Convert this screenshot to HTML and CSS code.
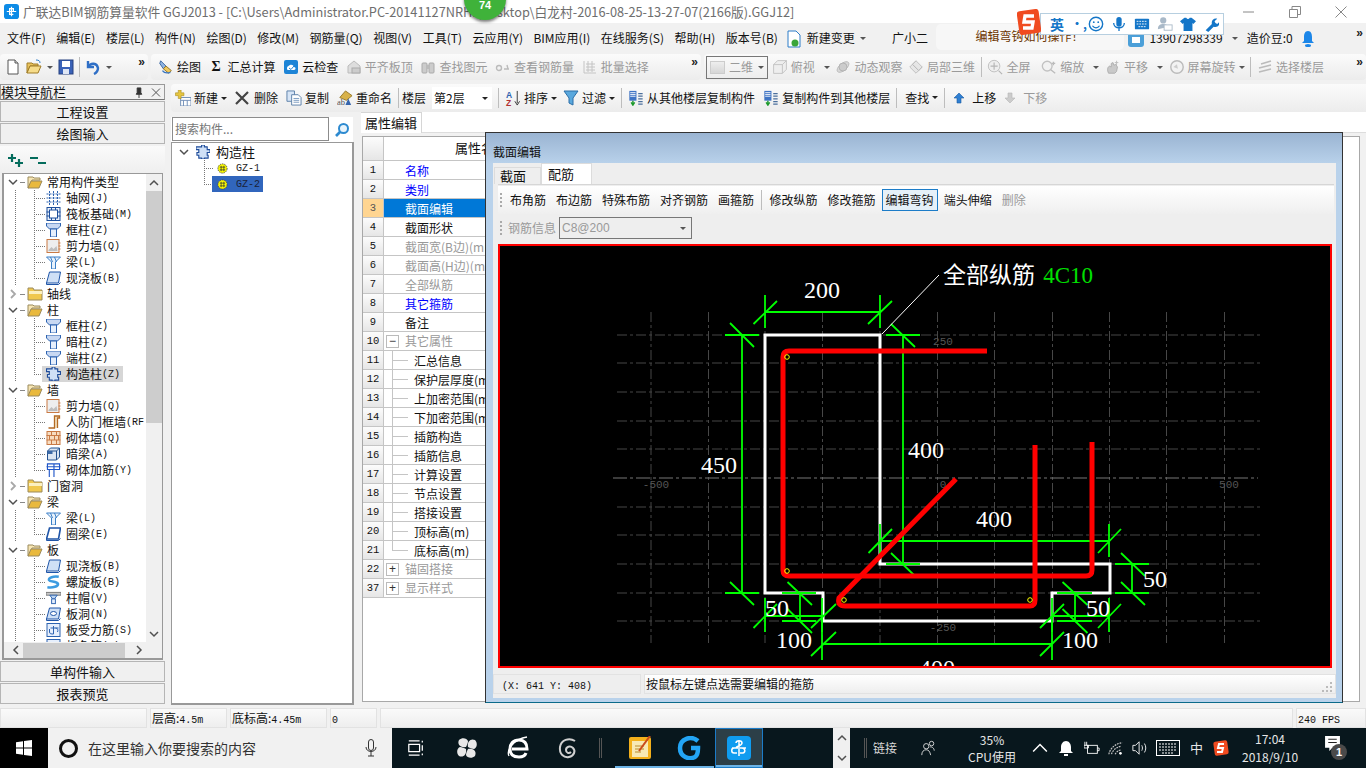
FILE: index.html
```html
<!DOCTYPE html>
<html lang="zh">
<head>
<meta charset="utf-8">
<title>广联达BIM钢筋算量软件</title>
<link rel="stylesheet" href="styles.css">
</head>
<body>
<svg class="defs" width="0" height="0">
<defs>
<symbol id="i-new" viewBox="0 0 16 16"><path d="M3 1h7l3 3v11H3z" fill="#fff" stroke="#555"/><path d="M10 1v3h3" fill="#ddd" stroke="#555"/></symbol>
<symbol id="i-open" viewBox="0 0 16 16"><path d="M1 4h5l1 1h5v2H4L1 14z" fill="#e8c25c" stroke="#a07c28"/><path d="M4 7h11l-3 7H1z" fill="#f6dc8a" stroke="#a07c28"/><path d="M10 1c3 0 4 1 4 3" fill="none" stroke="#2d7dc8"/></symbol>
<symbol id="i-save" viewBox="0 0 16 16"><rect x="1" y="1" width="14" height="14" fill="#3a62b8" stroke="#27407e"/><rect x="4" y="2" width="8" height="6" fill="#fff"/><rect x="5" y="10" width="6" height="5" fill="#dfe6f4"/></symbol>
<symbol id="i-undo" viewBox="0 0 16 16"><path d="M3 2v6h6" fill="none" stroke="#2f6fc6" stroke-width="2.4"/><path d="M3 8c3-5 9-4 10 1 0 3-2 5-4 6" fill="none" stroke="#2f6fc6" stroke-width="2.4"/></symbol>
<symbol id="i-draw" viewBox="0 0 18 18"><path d="M3 2l6 6-3 3-4-6z" fill="#8fb4e0" stroke="#35609c"/><path d="M9 8l6 5-3 3-6-5z" fill="#f1c95b" stroke="#8a6c20"/><path d="M5 13c2 3 6 3 9 2" fill="none" stroke="#3a76c0" stroke-width="1.4"/></symbol>
<symbol id="i-cloud" viewBox="0 0 16 16"><rect x="1" y="1" width="14" height="14" rx="2" fill="#1d84d6"/><path d="M4 9c0-2 2-2 3-3 2-1 4 1 4 2 2 0 2 3 0 3H5c-1 0-1-1-1-2z" fill="#fff"/><path d="M6 9l2 1.5L11 7" fill="none" stroke="#1d84d6"/></symbol>
<symbol id="i-align" viewBox="0 0 16 16"><path d="M2 14V7l6-5 6 5v7z" fill="#ddd" stroke="#bbb"/><rect x="6" y="9" width="8" height="5" fill="#ccc" stroke="#aaa"/></symbol>
<symbol id="i-binoc" viewBox="0 0 16 16"><rect x="2" y="4" width="5" height="10" rx="1" fill="#ccc" stroke="#aaa"/><rect x="9" y="4" width="5" height="10" rx="1" fill="#ccc" stroke="#aaa"/><rect x="6" y="6" width="4" height="4" fill="#bbb"/></symbol>
<symbol id="i-glasses" viewBox="0 0 16 16"><circle cx="4" cy="9" r="2.5" fill="none" stroke="#bbb" stroke-width="1.4"/><path d="M9 10h5M12 6l1 4" fill="none" stroke="#bbb" stroke-width="1.4"/></symbol>
<symbol id="i-batch" viewBox="0 0 16 16"><path d="M2 2v12h12M4 5h9M4 8h9M4 11h9M6 2v11M10 2v11" fill="none" stroke="#c4c4c4"/></symbol>
<symbol id="i-box" viewBox="0 0 20 20"><path d="M2 7l5-5h11v11l-5 5H2z" fill="#eee" stroke="#bbb"/><path d="M2 7h11v11M13 7l5-5" fill="none" stroke="#bbb"/></symbol>
<symbol id="i-orbit" viewBox="0 0 18 18"><ellipse cx="9" cy="9" rx="8" ry="4" transform="rotate(-40 9 9)" fill="#d8d8d8" stroke="#bbb"/><circle cx="9" cy="9" r="4.5" fill="#ccc" stroke="#b0b0b0"/></symbol>
<symbol id="i-local" viewBox="0 0 18 18"><path d="M2 9l7-7 7 7-7 7z" fill="#e6e6e6" stroke="#bbb"/><path d="M5 6l7 7M9 2l-4 4 7 7 4-4" fill="none" stroke="#bbb"/></symbol>
<symbol id="i-fit" viewBox="0 0 18 18"><circle cx="8" cy="8" r="6.5" fill="#eee" stroke="#bbb"/><path d="M8 4v8M4 8h8M13 13l4 4" fill="none" stroke="#b5b5b5" stroke-width="1.3"/></symbol>
<symbol id="i-zoom" viewBox="0 0 18 18"><circle cx="7" cy="8" r="5.5" fill="#f2f2f2" stroke="#c2c2c2" stroke-width="1.5"/><path d="M11 12l5 4M14 3v4M12 5h4" fill="none" stroke="#bbb" stroke-width="1.5"/></symbol>
<symbol id="i-pan" viewBox="0 0 18 18"><path d="M4 16c-2-4-1-7 1-8l2 1V5l2-1 1 3 2-1 2 3-1 5-2 2z" fill="#c9c9c9" stroke="#aaa"/><path d="M13 2v5M11 4h4" stroke="#bbb" fill="none"/></symbol>
<symbol id="i-rot" viewBox="0 0 18 18"><circle cx="9" cy="9" r="7" fill="#f2f2f2" stroke="#bbb" stroke-width="1.6"/><path d="M5 9l4-3 1 5z" fill="#ccc"/></symbol>
<symbol id="i-floor" viewBox="0 0 16 16"><path d="M4 5l10-3M2 9l12-3M2 13l12-3" stroke="#bbb" stroke-width="1.6" fill="none"/></symbol>
<symbol id="i-plusnew" viewBox="0 0 17 17"><rect x="6" y="8" width="11" height="9" fill="#fff" stroke="#6f8db5"/><path d="M6 11h11M9 11v6M13 11v6" stroke="#6f8db5"/><path d="M3.5 0h3v3h3v3h-3v3h-3V6h-3V3h3z" fill="#e6c53f" stroke="#a88b1f" stroke-width=".6"/></symbol>
<symbol id="i-x" viewBox="0 0 14 14"><path d="M1 1l12 12M13 1L1 13" stroke="#444" stroke-width="2.2"/></symbol>
<symbol id="i-copy" viewBox="0 0 17 17"><path d="M1 1h8v11H1z" fill="#d7e5f6" stroke="#5b7fa8"/><path d="M6 5h7l3 3v8H6z" fill="#fff" stroke="#5b7fa8"/><path d="M8 9h6M8 11h6M8 13h6" stroke="#7a9ac0"/></symbol>
<symbol id="i-rename" viewBox="0 0 17 17"><path d="M3 8l6-7 7 5-6 5z" fill="#d8b24a" stroke="#96782a"/><text x="0" y="16" class="ab">ab</text><path d="M12 9l-3 7h6z" fill="#3665ad"/></symbol>
<symbol id="i-sort" viewBox="0 0 15 17"><text x="0" y="8" class="az a">A</text><text x="0" y="17" class="az z">Z</text><path d="M12 1v13M9.5 12l2.5 4 2.5-4" stroke="#333" fill="none"/></symbol>
<symbol id="i-filter" viewBox="0 0 16 16"><path d="M1 1h14l-5 7v7l-4-2V8z" fill="#5aa8dd" stroke="#2c6fa8"/></symbol>
<symbol id="i-cfrom" viewBox="0 0 17 18"><rect x="1" y="1" width="8" height="11" fill="#3f74c4"/><path d="M2 3h6M2 5h6M2 7h6" stroke="#fff"/><path d="M5 12v4M3 14l2 3 2-3" stroke="#1e9a2e" fill="none" stroke-width="1.6"/><path d="M11 4h5M11 7h5M11 10h5M11 13h5M11 16h5" stroke="#4b6f9c" stroke-width="1.4"/></symbol>
<symbol id="i-up" viewBox="0 0 12 12"><path d="M6 1l5 5H8v5H4V6H1z" fill="#2f7fd2" stroke="#1a5aa2" stroke-width=".6"/></symbol>
<symbol id="i-down" viewBox="0 0 12 12"><path d="M4 1h4v5h3l-5 5-5-5h3z" fill="#ccc" stroke="#b5b5b5" stroke-width=".6"/></symbol>
<symbol id="i-search" viewBox="0 0 16 16"><circle cx="9.5" cy="6.5" r="4.5" fill="#e8f4fc" stroke="#2d8ad0" stroke-width="2"/><path d="M6 10l-4 4" stroke="#2d8ad0" stroke-width="2.6"/></symbol>
<symbol id="i-fo" viewBox="0 0 16 14"><path d="M1 2h5l1 1h6v2H5l-2 7-2 1z" fill="#f7e6b4" stroke="#9b8a5c"/><path d="M4 6h11l-3 7H1z" fill="#e9b93e" stroke="#9b8a5c"/></symbol>
<symbol id="i-fc" viewBox="0 0 16 14"><path d="M1 3V1h5l1 2h8v10H1z" fill="#f0c84e" stroke="#9b8a5c"/><path d="M2 4h13v3H2z" fill="#fbf0c0"/></symbol>
<symbol id="i-grid" viewBox="0 0 14 14"><path d="M0 3h14M0 7h14M0 11h14M3 0v14M7 0v14M11 0v14" stroke="#2d63b0" fill="none" stroke-dasharray="2 1"/></symbol>
<symbol id="i-raft" viewBox="0 0 14 14"><rect x=".5" y=".5" width="13" height="13" fill="#e9f0fb" stroke="#1d4f9c"/><rect x="3" y="3" width="8" height="8" fill="#fff" stroke="#1d4f9c"/><path d="M0 5h3M0 9h3M11 5h3M11 9h3M5 0v3M9 0v3M5 11v3M9 11v3" stroke="#1d4f9c"/></symbol>
<symbol id="i-col" viewBox="0 0 14 14"><path d="M0 0h14v3l-3 3H3L0 3z" fill="#c8d8f2" stroke="#2d63b0"/><rect x="4" y="6" width="6" height="8" fill="#e6effc" stroke="#2d63b0"/></symbol>
<symbol id="i-wall" viewBox="0 0 14 14"><rect x=".5" y=".5" width="12" height="13" fill="#eee" stroke="#c97a45"/><path d="M2 11l3-3 2 2 3-3 1 5H2z" fill="#aaa" opacity=".7"/><path d="M12 4h2M12 7h2M12 10h2" stroke="#c97a45"/></symbol>
<symbol id="i-beam" viewBox="0 0 14 14"><path d="M0 2h14L9 7v7H5V7z" fill="#e8f1fb" stroke="#3a7fc6"/><path d="M4 2l2 5M8 2l2 5" stroke="#3a7fc6"/></symbol>
<symbol id="i-slab" viewBox="0 0 14 14"><path d="M3 1h11l-2 11H0z" fill="#cfe0f6" stroke="#1f55a8"/><path d="M0 12v1.5h12l2-2" fill="none" stroke="#1f55a8"/></symbol>
<symbol id="i-gz" viewBox="0 0 15 15"><path d="M3 2h3V0h3v2h3v3h3v3h-3v3h1v3H9v1H6v-1H3v-3H1V8h2V5H0V2z" fill="#cfe0f6" stroke="#1f4c9a" stroke-width="1.2"/></symbol>
<symbol id="i-bar" viewBox="0 0 12 12"><circle cx="6" cy="6" r="5" fill="#ffff00" stroke="#444" stroke-dasharray="1.5 1"/><path d="M3 4.5h6M3 7.5h6M4.5 3v6M7.5 3v6" stroke="#333" stroke-width=".8"/></symbol>
<symbol id="i-door" viewBox="0 0 14 14"><path d="M2 13h6V1h5v2h-2v10" fill="#f5e3c4" stroke="#b36a24" stroke-width="1.3"/></symbol>
<symbol id="i-brick" viewBox="0 0 14 14"><rect x=".5" y=".5" width="13" height="13" fill="#f7dcc0" stroke="#c97a45"/><path d="M0 4.5h14M0 9h14M5 0v4.5M10 0v4.5M3 4.5V9M8 4.5V9M12 4.5V9M5 9v5M10 9v5" stroke="#c97a45"/></symbol>
<symbol id="i-dark" viewBox="0 0 14 14"><path d="M1 4l3-3h9v9l-3 3H1z" fill="#dbe6f3" stroke="#24528f"/><path d="M1 4h9v9M10 4l3-3" fill="none" stroke="#24528f"/><rect x="1" y="4" width="5" height="3" fill="#3c6aa8"/></symbol>
<symbol id="i-reinf" viewBox="0 0 15 15"><path d="M1 1h13v6H1zM3 7v8M8 1v14M0 4h15" fill="none" stroke="#1f55c8" stroke-width="1.2"/></symbol>
<symbol id="i-ring" viewBox="0 0 14 14"><path d="M3 1h11l-2 11H0z" fill="#fff" stroke="#1f55a8" stroke-width="1.6"/><path d="M0 12v1.5h12l2-2" fill="none" stroke="#1f55a8"/></symbol>
<symbol id="i-spiral" viewBox="0 0 16 16"><path d="M14 2C8 1 2 3 3 6c1 2 9 1 10 4s-6 5-12 4" fill="none" stroke="#3d9be0" stroke-width="3"/></symbol>
<symbol id="i-cap" viewBox="0 0 16 14"><rect x="0" y="1" width="16" height="3" fill="#c8c8c8" stroke="#777"/><path d="M4 4h8L9 8H7z" fill="#bcd4f2" stroke="#2d63b0"/><rect x="6" y="8" width="4" height="5" fill="#e6effc" stroke="#2d63b0"/></symbol>
<symbol id="i-hole" viewBox="0 0 14 14"><path d="M3 1h11l-2 11H0z" fill="#cfe0f6" stroke="#1f55a8"/><ellipse cx="7" cy="6.5" rx="3" ry="2" fill="#fff" stroke="#1f55a8"/><path d="M0 12v1.5h12l2-2" fill="none" stroke="#1f55a8"/></symbol>
<symbol id="i-sbar" viewBox="0 0 14 14"><rect x=".5" y=".5" width="13" height="13" fill="#e6effc" stroke="#2d63b0"/><path d="M3 6v3c0 2 2 2 4 2M7 3v8M9 5c2 0 3 2 2 4M4 5h8" fill="none" stroke="#2d63b0"/></symbol>
<symbol id="i-chev" viewBox="0 0 10 10"><path d="M1 3l4 4 4-4" fill="none" stroke="#505050" stroke-width="1.5"/></symbol>
<symbol id="i-chevr" viewBox="0 0 10 10"><path d="M3 1l4 4-4 4" fill="none" stroke="#a8a8a8" stroke-width="1.8"/></symbol>
</defs>
</svg>

<div class="app">
  <header class="titlebar">
    <svg class="appicon" viewBox="0 0 16 16"><rect width="16" height="16" rx="3" fill="#0c8be6"/><path d="M8 3v10M3 8h10M6 5h4v3H6zM6 8v3h4" fill="none" stroke="#fff" stroke-width="1.3"/></svg>
    <span class="titletext">广联达BIM钢筋算量软件 GGJ2013 - [C:\Users\Administrator.PC-20141127NRHI\Desktop\白龙村-2016-08-25-13-27-07(2166版).GGJ12]</span>
    <div class="winctl">
      <svg class="wc" viewBox="0 0 12 12"><path d="M0 6h11" stroke="#888"/></svg>
      <svg class="wc" viewBox="0 0 12 12"><path d="M.5 3.5h8v8h-8zM3 3V.5h8.500v8H9" fill="none" stroke="#888"/></svg>
      <svg class="wc" viewBox="0 0 12 12"><path d="M.5.5l11 11M11.500.5l-11 11" stroke="#888"/></svg>
    </div>
  </header>

  <nav class="menubar">
    <span>文件(F)</span><span>编辑(E)</span><span>楼层(L)</span><span>构件(N)</span><span>绘图(D)</span><span>修改(M)</span><span>钢筋量(Q)</span><span>视图(V)</span><span>工具(T)</span><span>云应用(Y)</span><span>BIM应用(I)</span><span>在线服务(S)</span><span>帮助(H)</span><span>版本号(B)</span>
    <svg class="ic m-new" viewBox="0 0 16 18"><path d="M2 1h8l4 4v12H2z" fill="#fff" stroke="#2d7dc8"/><circle cx="9" cy="13" r="3.500" fill="#3aa53a"/></svg>
    <span class="m-newtext">新建变更</span><i class="arrow a-new"></i>
    <span class="m-xiao">广小二</span>
    <div class="hint"><span>编辑弯钩如何操作！</span></div>
    <svg class="ic m-user" viewBox="0 0 16 16"><rect width="16" height="16" rx="3" fill="#4b9fd8"/><rect x="4" y="6" width="8" height="6" fill="#fff"/></svg>
    <span class="m-phone">13907298339</span><i class="arrow a-sm"></i>
    <span class="m-bean">造价豆:0</span>
    <svg class="ic m-bell" viewBox="0 0 14 18"><path d="M7 1c-3 0-4 3-4 6v4l-2 2h12l-2-2V7c0-3-1-6-4-6z" fill="#1c86e8"/><ellipse cx="7" cy="15.500" rx="3" ry="1.500" fill="#1c86e8"/></svg>
    <span class="more">»</span>
  </nav>

  <div class="toolrow">
    <div class="seg seg-a">
      <svg class="ic"><use href="#i-new"/></svg>
      <svg class="ic"><use href="#i-open"/></svg><i class="arrow"></i>
      <svg class="ic"><use href="#i-save"/></svg>
      <i class="sep"></i>
      <svg class="ic"><use href="#i-undo"/></svg><i class="arrow"></i>
      <span class="more">»</span>
    </div>
    <div class="seg seg-b">
      <span class="tool"><svg class="ic"><use href="#i-draw"/></svg>绘图</span>
      <span class="tool"><b class="sigma">Σ</b>汇总计算</span>
      <span class="tool"><svg class="ic"><use href="#i-cloud"/></svg>云检查</span>
      <span class="tool off"><svg class="ic"><use href="#i-align"/></svg>平齐板顶</span>
      <span class="tool off"><svg class="ic"><use href="#i-binoc"/></svg>查找图元</span>
      <span class="tool off"><svg class="ic"><use href="#i-glasses"/></svg>查看钢筋量</span>
      <span class="tool off"><svg class="ic"><use href="#i-batch"/></svg>批量选择</span>
      <span class="more end">»</span>
    </div>
    <div class="seg seg-c off">
      <span class="combo2d"><i class="sq"></i>二维<i class="arrow"></i></span>
      <span class="tool t-top"><svg class="ic"><use href="#i-box"/></svg>俯视<i class="arrow gap"></i></span>
      <span class="tool"><svg class="ic"><use href="#i-orbit"/></svg>动态观察</span>
      <span class="tool"><svg class="ic"><use href="#i-local"/></svg>局部三维</span>
      <i class="sep"></i>
      <span class="tool"><svg class="ic"><use href="#i-fit"/></svg>全屏</span>
      <span class="tool t-zoom"><svg class="ic"><use href="#i-zoom"/></svg>缩放<i class="arrow gap"></i></span>
      <span class="tool"><svg class="ic"><use href="#i-pan"/></svg>平移<i class="arrow gap"></i></span>
      <span class="tool"><svg class="ic"><use href="#i-rot"/></svg>屏幕旋转<i class="arrow"></i></span>
      <i class="sep"></i>
      <span class="tool"><svg class="ic"><use href="#i-floor"/></svg>选择楼层</span>
      <span class="more end dark">»</span>
    </div>
  </div>

  <main class="main">
    <aside class="nav">
      <div class="navhead"><span>模块导航栏</span><span class="pin">
        <svg class="pinic" viewBox="0 0 10 12"><path d="M3 1h4v5l1 2H2l1-2zM5 8v4" fill="#333" stroke="#333"/></svg>
        <svg class="pinic" viewBox="0 0 10 10"><path d="M1 1l8 8M9 1l-8 8" stroke="#555"/></svg></span></div>
      <div class="navbtn">工程设置</div>
      <div class="navbtn">绘图输入</div>
      <div class="pmbar">
        <svg class="pm" viewBox="0 0 18 18"><path d="M5 3v8M1 7h8M12 8v8M8 12h8" stroke="#046c5c" stroke-width="2.200"/></svg>
        <svg class="pm" viewBox="0 0 18 18"><path d="M1 7h8M9 12h8" stroke="#046c5c" stroke-width="2.200"/></svg>
      </div>
      <div class="navtree">
        <div class="treebody">
          <div class="rows">
            <div class="r top open"><svg class="tw"><use href="#i-chev"/></svg><svg class="fo"><use href="#i-fo"/></svg>常用构件类型</div>
            <div class="r kid"><svg class="ci"><use href="#i-grid"/></svg>轴网<i class="m">(J)</i></div>
            <div class="r kid"><svg class="ci"><use href="#i-raft"/></svg>筏板基础<i class="m">(M)</i></div>
            <div class="r kid"><svg class="ci"><use href="#i-col"/></svg>框柱<i class="m">(Z)</i></div>
            <div class="r kid"><svg class="ci"><use href="#i-wall"/></svg>剪力墙<i class="m">(Q)</i></div>
            <div class="r kid"><svg class="ci"><use href="#i-beam"/></svg>梁<i class="m">(L)</i></div>
            <div class="r kid last"><svg class="ci"><use href="#i-slab"/></svg>现浇板<i class="m">(B)</i></div>
            <div class="r top"><svg class="tw"><use href="#i-chevr"/></svg><svg class="fo"><use href="#i-fc"/></svg>轴线</div>
            <div class="r top open"><svg class="tw"><use href="#i-chev"/></svg><svg class="fo"><use href="#i-fo"/></svg>柱</div>
            <div class="r kid"><svg class="ci"><use href="#i-col"/></svg>框柱<i class="m">(Z)</i></div>
            <div class="r kid"><svg class="ci"><use href="#i-col"/></svg>暗柱<i class="m">(Z)</i></div>
            <div class="r kid"><svg class="ci"><use href="#i-col"/></svg>端柱<i class="m">(Z)</i></div>
            <div class="r kid last"><span class="hl"><svg class="ci"><use href="#i-gz"/></svg>构造柱<i class="m">(Z)</i></span></div>
            <div class="r top open"><svg class="tw"><use href="#i-chev"/></svg><svg class="fo"><use href="#i-fo"/></svg>墙</div>
            <div class="r kid"><svg class="ci"><use href="#i-wall"/></svg>剪力墙<i class="m">(Q)</i></div>
            <div class="r kid"><svg class="ci"><use href="#i-door"/></svg>人防门框墙<i class="m">(RF</i></div>
            <div class="r kid"><svg class="ci"><use href="#i-brick"/></svg>砌体墙<i class="m">(Q)</i></div>
            <div class="r kid"><svg class="ci"><use href="#i-dark"/></svg>暗梁<i class="m">(A)</i></div>
            <div class="r kid last"><svg class="ci"><use href="#i-reinf"/></svg>砌体加筋<i class="m">(Y)</i></div>
            <div class="r top"><svg class="tw"><use href="#i-chevr"/></svg><svg class="fo"><use href="#i-fc"/></svg>门窗洞</div>
            <div class="r top open"><svg class="tw"><use href="#i-chev"/></svg><svg class="fo"><use href="#i-fo"/></svg>梁</div>
            <div class="r kid"><svg class="ci"><use href="#i-beam"/></svg>梁<i class="m">(L)</i></div>
            <div class="r kid last"><svg class="ci"><use href="#i-ring"/></svg>圈梁<i class="m">(E)</i></div>
            <div class="r top open"><svg class="tw"><use href="#i-chev"/></svg><svg class="fo"><use href="#i-fo"/></svg>板</div>
            <div class="r kid"><svg class="ci"><use href="#i-slab"/></svg>现浇板<i class="m">(B)</i></div>
            <div class="r kid"><svg class="ci"><use href="#i-spiral"/></svg>螺旋板<i class="m">(B)</i></div>
            <div class="r kid"><svg class="ci"><use href="#i-cap"/></svg>柱帽<i class="m">(V)</i></div>
            <div class="r kid"><svg class="ci"><use href="#i-hole"/></svg>板洞<i class="m">(N)</i></div>
            <div class="r kid"><svg class="ci"><use href="#i-sbar"/></svg>板受力筋<i class="m">(S)</i></div>
            <div class="r kid"><svg class="ci"><use href="#i-sbar"/></svg>板负筋<i class="m">(F)</i></div>
          </div>
          <div class="vscroll">
            <svg class="sa flip"><use href="#i-chev"/></svg>
            <div class="vthumb"></div>
            <div class="vspace"></div>
            <svg class="sa"><use href="#i-chev"/></svg>
          </div>
        </div>
        <div class="hscroll">
          <svg class="sa left"><use href="#i-chev"/></svg>
          <div class="hthumb"></div>
          <svg class="sa right"><use href="#i-chev"/></svg>
        </div>
      </div>
      <div class="navbtn">单构件输入</div>
      <div class="navbtn">报表预览</div>
    </aside>

    <section class="work">
      <div class="toolbar2">
        <span class="tool"><svg class="ic"><use href="#i-plusnew"/></svg>新建<i class="arrow dk"></i></span>
        <span class="tool t-del"><svg class="ic ic-x"><use href="#i-x"/></svg>删除</span>
        <span class="tool t-del"><svg class="ic"><use href="#i-copy"/></svg>复制</span>
        <span class="tool t-ren"><svg class="ic"><use href="#i-rename"/></svg>重命名</span>
        <i class="sep s-tight"></i>
        <span>楼层</span>
        <span class="floorsel">第2层<i class="arrow dk"></i></span>
        <i class="sep"></i>
        <span class="tool"><svg class="ic"><use href="#i-sort"/></svg>排序<i class="arrow dk"></i></span>
        <span class="tool"><svg class="ic"><use href="#i-filter"/></svg>过滤<i class="arrow dk"></i></span>
        <i class="sep"></i>
        <span class="tool"><svg class="ic"><use href="#i-cfrom"/></svg>从其他楼层复制构件</span>
        <span class="tool t-cpy"><svg class="ic"><use href="#i-cfrom"/></svg>复制构件到其他楼层</span>
        <i class="sep"></i>
        <span class="tool t-cpy">查找<i class="arrow dk"></i></span>
        <i class="sep"></i>
        <span class="tool t-cpy"><svg class="ic ic-ud"><use href="#i-up"/></svg>上移</span>
        <span class="tool off t-cpy"><svg class="ic ic-ud"><use href="#i-down"/></svg>下移</span>
      </div>
      <div class="workbody">
        <div class="midcol">
          <div class="searchrow">
            <div class="searchbox">搜索构件...</div>
            <svg class="searchic"><use href="#i-search"/></svg>
          </div>
          <div class="comptree">
            <div class="tr0"><svg class="tw"><use href="#i-chev"/></svg><svg class="gzi"><use href="#i-gz"/></svg>构造柱</div>
            <div class="tr1"><svg class="bi"><use href="#i-bar"/></svg><span class="gzt">GZ-1</span></div>
            <div class="tr1 lastc"><span class="sel"><svg class="bi"><use href="#i-bar"/></svg><span class="gzt">GZ-2</span></span></div>
          </div>
        </div>
        <div class="rightcol">
          <div class="tabline"><span class="ptab">属性编辑</span></div>
          <div class="grid">
            <div class="gr head"><span class="n"></span><span class="name c">属性名称</span></div>
            <div class="gr"><span class="n">1</span><span class="name l1 blue">名称</span></div>
            <div class="gr"><span class="n">2</span><span class="name l1 blue">类别</span></div>
            <div class="gr cur"><span class="n">3</span><span class="name l1">截面编辑</span></div>
            <div class="gr"><span class="n">4</span><span class="name l1">截面形状</span></div>
            <div class="gr"><span class="n">5</span><span class="name l1 gray">截面宽(B边)(mm)</span></div>
            <div class="gr"><span class="n">6</span><span class="name l1 gray">截面高(H边)(mm)</span></div>
            <div class="gr"><span class="n">7</span><span class="name l1 gray">全部纵筋</span></div>
            <div class="gr"><span class="n">8</span><span class="name l1 blue">其它箍筋</span></div>
            <div class="gr"><span class="n">9</span><span class="name l1">备注</span></div>
            <div class="gr"><span class="n">10</span><span class="name exp gray"><i class="pb">−</i>其它属性</span></div>
            <div class="gr"><span class="n">11</span><span class="name l2">汇总信息</span></div>
            <div class="gr"><span class="n">12</span><span class="name l2">保护层厚度(mm)</span></div>
            <div class="gr"><span class="n">13</span><span class="name l2">上加密范围(mm)</span></div>
            <div class="gr"><span class="n">14</span><span class="name l2">下加密范围(mm)</span></div>
            <div class="gr"><span class="n">15</span><span class="name l2">插筋构造</span></div>
            <div class="gr"><span class="n">16</span><span class="name l2">插筋信息</span></div>
            <div class="gr"><span class="n">17</span><span class="name l2">计算设置</span></div>
            <div class="gr"><span class="n">18</span><span class="name l2">节点设置</span></div>
            <div class="gr"><span class="n">19</span><span class="name l2">搭接设置</span></div>
            <div class="gr"><span class="n">20</span><span class="name l2">顶标高(m)</span></div>
            <div class="gr"><span class="n">21</span><span class="name l2 tail">底标高(m)</span></div>
            <div class="gr"><span class="n">22</span><span class="name exp gray"><i class="pb">+</i>锚固搭接</span></div>
            <div class="gr"><span class="n">37</span><span class="name exp gray"><i class="pb">+</i>显示样式</span></div>
          </div>
        </div>
      </div>
    </section>
  </main>

  <footer class="statusbar">
    <span class="sc s1"></span>
    <span class="sc s2">层高:<i class="m">4.5m</i></span>
    <span class="sc s3">底标高:<i class="m">4.45m</i></span>
    <span class="sc s4"><i class="m">0</i></span>
    <span class="sc s5"></span>
    <span class="sc s6"><i class="m">240 FPS</i></span>
  </footer>

  <div class="taskbar">
    <div class="start"><svg class="winlogo" viewBox="0 0 16 16"><path d="M0 2.200l7-1v6.300H0zM8 1l8-1v7.500H8zM0 8.500h7v6.300l-7-1zM8 8.500h8V16l-8-1.100z" fill="#fff"/></svg></div>
    <div class="tbsearch">
      <i class="cortana"></i><span class="tbph">在这里输入你要搜索的内容</span>
      <svg class="mic" viewBox="0 0 12 18"><rect x="3.500" y=".5" width="5" height="11" rx="2.500" fill="none" stroke="#333"/><path d="M1 8c0 6 10 6 10 0M6 13v4M3 17h6" fill="none" stroke="#333"/></svg>
    </div>
    <div class="tbapps">
      <span class="tbi"><svg class="ti" viewBox="0 0 20 20"><path d="M2 2h12M2 18h12M2 6h12v8H2zM17 2v2M17 7v6M17 16v2" fill="none" stroke="#fff" stroke-width="1.400"/></svg></span>
      <span class="tbi"><svg class="ti big" viewBox="0 0 24 24"><g fill="#e8e8e8"><path d="M11 11C5 12 2 8 4 4c3-3 8-2 9 1 0 2-1 4-2 6zM13 11c-1-6 3-9 7-7 3 3 2 8-1 9-2 0-4-1-6-2zM13 13c6-1 9 3 7 7-3 3-8 2-9-1 0-2 1-4 2-6zM11 13c1 6-3 9-7 7-3-3-2-8 1-9 2 0 4 1 6 2z"/></g></svg></span>
      <span class="tbi"><svg class="ti big" viewBox="0 0 24 24"><path d="M6 13h15c0-6-3-9-8-9-6 0-9 4-9 9s3 8 9 8c3 0 6-1 7-4" fill="none" stroke="#fff" stroke-width="3"/><path d="M3 20C0 14 8 3 21 1" fill="none" stroke="#fff" stroke-width="1.300"/></svg></span>
      <span class="tbi narrow"><svg class="ti big" viewBox="0 0 24 24"><path d="M19 5C13 1 5 4 4 11s4 11 9 10 7-6 4-9-7-1-7 2 3 4 5 2" fill="none" stroke="#d0d0d0" stroke-width="2"/></svg></span>
      <i class="tbsep"></i>
      <span class="tbi ul"><svg class="ti big note" viewBox="0 0 24 24"><rect x="1" y="1" width="22" height="22" rx="2" fill="#f3b01c"/><rect x="4" y="5" width="16" height="16" fill="#f8e9b5"/><path d="M7 10h9M7 13h9M7 16h6" stroke="#b98c2c"/><path d="M22 0L11 15" stroke="#c94b1c" stroke-width="2"/></svg></span>
      <span class="tbi ul u2"><svg class="ti big" viewBox="0 0 24 24"><path d="M21 5C14-1 3 3 3 12s9 12 15 9c3-2 3-6 3-9h-7" fill="none" stroke="#23a5f5" stroke-width="4.500"/></svg></span>
      <span class="tbi act"><svg class="ti big" viewBox="0 0 24 24"><rect width="24" height="24" rx="4" fill="#0f9cf0"/><path d="M12 4v7M12 13v7M5 12h14M9 7c0-3 6-3 6 0s-6 3-6 5M7 12c-3 0-3 5 0 5h3M15 12c3 0 4 4 1 5h-3" fill="none" stroke="#fff" stroke-width="1.500"/></svg></span>
    </div>
    <div class="tbscroll">
      <svg class="sa flip"><use href="#i-chev"/></svg>
      <svg class="sa"><use href="#i-chev"/></svg>
    </div>
    <i class="tbsep tb2"></i>
    <span class="tblink">链接</span>
    <svg class="tray people" viewBox="0 0 18 18"><circle cx="7" cy="7" r="3" fill="none" stroke="#e0e0e0"/><circle cx="13" cy="4" r="2.500" fill="none" stroke="#e0e0e0"/><path d="M2 17c0-4 2-6 5-6s4 2 5 6M11 8c2-1 5 1 5 4" fill="none" stroke="#e0e0e0"/></svg>
    <div class="cpu"><span>35%</span><span>CPU使用</span></div>
    <div class="traybox">
      <svg class="tray tr-up" viewBox="0 0 14 14"><path d="M1 10l6-6 6 6" fill="none" stroke="#fff" stroke-width="1.300"/></svg>
      <svg class="tray tr-bell" viewBox="0 0 16 16"><path d="M8 1c-3 0-5 3-5 6v4l-2 2h14l-2-2V7c0-3-2-6-5-6z" fill="#fff"/><rect x="6" y="14" width="4" height="2" fill="#fff"/></svg>
      <svg class="tray" viewBox="0 0 18 16"><rect x="4" y="5" width="11" height="9" fill="none" stroke="#fff"/><path d="M15 8h2v3h-2M1 1v4M3 1v4M0 5h5v3H0z" fill="none" stroke="#fff"/></svg>
      <svg class="tray" viewBox="0 0 18 16"><path d="M1 15C2 9 8 3 16 2M4 15c1-4 5-8 11-9M8 15c1-2 3-4 7-5" fill="none" stroke="#c8c8c8" stroke-dasharray="2 1" stroke-width="1.300"/><circle cx="14" cy="14" r="1.500" fill="#fff"/></svg>
      <svg class="tray" viewBox="0 0 18 16"><path d="M1 5h3l4-4v14l-4-4H1z" fill="none" stroke="#fff"/><path d="M11 5c1 2 1 4 0 6M14 3c2 3 2 7 0 10" fill="none" stroke="#fff"/></svg>
      <svg class="tray kbd" viewBox="0 0 24 16"><rect x=".5" y=".5" width="23" height="15" fill="none" stroke="#fff"/><path d="M3 4h18M3 7h18M3 10h18M6 13h12" stroke="#fff" stroke-dasharray="2 1"/></svg>
      <span class="tbzh">中</span>
      <svg class="tray so" viewBox="0 0 16 16"><rect x="1" y="1" width="14" height="14" rx="2" fill="#f04b20" transform="rotate(-8 8 8)"/><path d="M11 4H6L5 8h5l-1 4H4" fill="none" stroke="#fff" stroke-width="2"/></svg>
    </div>
    <div class="clock"><span>17:04</span><span>2018/9/10</span></div>
    <div class="notif">
      <svg class="tray noti" viewBox="0 0 16 16"><path d="M1 1h14v11H8l-3 3v-3H1z" fill="#fff"/><path d="M4 4h8M4 7h8" stroke="#222"/></svg>
      <b class="nbadge">1</b>
    </div>
  </div>

  <!-- floating dialog -->
  <div class="dialog">
    <div class="dtitle">截面编辑</div>
    <div class="dclient">
      <div class="dtabs"><span class="dtab">截面</span><span class="dtab on">配筋</span></div>
      <div class="dpane">
        <div class="dtools">
          <i class="grip"></i>
          <span>布角筋</span><span>布边筋</span><span>特殊布筋</span><span>对齐钢筋</span><span>画箍筋</span>
          <i class="sep d-sep"></i>
          <span>修改纵筋</span><span>修改箍筋</span><span class="act">编辑弯钩</span><span>端头伸缩</span><span class="off">删除</span>
        </div>
        <div class="dinfo">
          <i class="grip"></i><span class="off">钢筋信息</span>
          <span class="dsel">C8@200<i class="arrow"></i></span>
        </div>
        <div class="canvas">
          <svg class="cad" viewBox="500 246 830 420" width="830" height="420">
            <g class="gridl">
              <path d="M617 335H1262M617 363H1262M617 392H1262M617 421H1262M617 449H1262M617 507H1262M617 535H1262M617 564H1262M617 593H1262M617 621H1262"/>
              <path d="M651 312V643M708.500 312V643M765 312V643M822.500 312V643M880 312V643M937.500 312V643M994.500 312V643M1052.500 312V643M1109.500 312V643M1166.500 312V643M1224.500 312V643"/>
            </g>
            <path class="axis" d="M613 478H1258"/>
            <text class="lab" x="656" y="488">-500</text>
            <text class="lab" x="943" y="345">250</text>
            <text class="lab" x="943" y="488">0</text>
            <text class="lab" x="1229" y="488">500</text>
            <text class="lab" x="943" y="631">-250</text>
            <path class="outline" d="M765 335H880V564H1110V593H1052V621H823V593H765Z"/>
            <g class="dim">
              <path d="M765 312H880M765 295V328M880 295V328M753.500 324L777 301M868 324L892 301"/>
              <path d="M742 335V593M725 335H759M725 593H759M730 323L754 347M730 582L754 605"/>
              <path d="M903 335V564M886 335H920M886 564H920M891 324L915 347M891 553L915 576"/>
              <path d="M880 541H1109M880 524V557M1109 524V557M868.500 553L892 529M1098 553L1121 529"/>
              <path d="M1132 564V593M1115 564H1149M1115 593H1149M1121 553L1145 576M1121 582L1145 605"/>
              <path d="M800 593V621M782 593H816M782 621H816M787.500 582L812 605M787.500 609L812 633"/>
              <path d="M765 616H822M765 598V632M822 598V632M753.500 628L777 604M811 628L836 604"/>
              <path d="M1075 593V621M1057 593H1092M1057 621H1092M1062.500 582L1087.500 605M1062.500 609L1087.500 633"/>
              <path d="M1052 616H1109M1052 598V632M1109 598V632M1040 628L1064 604M1098 628L1121 604"/>
              <path d="M822 644H1052M822 616V660M1052 616V660M811 656L836 632M1040 656L1064 632"/>
            </g>
            <path class="leader" d="M882 334L939 275"/>
            <g class="rebar">
              <path d="M987 351H789Q783 351 783 357V570Q783 576 789 576H1086Q1092 576 1092 570V442"/>
              <path d="M956 479L839 598Q837 606 845 606H1030Q1035 606 1035 600V445"/>
            </g>
            <g class="node">
              <circle cx="787" cy="357" r="2.300"/><circle cx="787" cy="571" r="2.300"/><circle cx="844" cy="600" r="2.300"/><circle cx="1030" cy="600" r="2.300"/>
            </g>
            <text class="callout" x="943" y="283">全部纵筋 <tspan class="gr4" dx="3">4C10</tspan></text>
            <text class="dimt" x="804" y="298">200</text>
            <text class="dimt" x="701" y="473">450</text>
            <text class="dimt" x="908" y="458">400</text>
            <text class="dimt" x="976" y="527">400</text>
            <text class="dimt" x="1143" y="587">50</text>
            <text class="dimt" x="765" y="616">50</text>
            <text class="dimt" x="1086" y="616">50</text>
            <text class="dimt" x="776" y="648">100</text>
            <text class="dimt" x="1062" y="648">100</text>
            <text class="dimt" x="919" y="676">400</text>
          </svg>
        </div>
      </div>
      <div class="dstatus">
        <span class="ds1"><i class="m">(X: 641 Y: 408)</i></span>
        <span class="ds2">按鼠标左键点选需要编辑的箍筋<svg class="sizer" viewBox="0 0 12 12"><path d="M9 1h2v2H9zM5 5h2v2H5zM9 5h2v2H9zM1 9h2v2H1zM5 9h2v2H5zM9 9h2v2H9z" fill="#bbb"/></svg></span>
      </div>
    </div>
  </div>

  <!-- overlays -->
  <div class="badge74"><span>74</span></div>
  <div class="sogou">
    <svg class="sologo" viewBox="0 0 24 26"><rect x="1" y="1" width="22" height="24" rx="3" fill="#f04b20" transform="rotate(-8 12 13)"/><path d="M17 7H8L7 13h9l-1 6H6" fill="none" stroke="#fff" stroke-width="3.400"/></svg>
    <div class="sobar">
      <span class="soen">英</span>
      <span class="sopunc">•,</span>
      <svg class="soi" viewBox="0 0 18 18"><circle cx="9" cy="9" r="7.500" fill="none" stroke="#1476c8" stroke-width="1.600"/><circle cx="6.500" cy="7" r="1" fill="#1476c8"/><circle cx="11.500" cy="7" r="1" fill="#1476c8"/><path d="M5 11c2 3 6 3 8 0" fill="none" stroke="#1476c8" stroke-width="1.400"/></svg>
      <svg class="soi" viewBox="0 0 18 18"><rect x="6" y="1" width="6" height="11" rx="3" fill="#1476c8"/><path d="M3 8c0 7 12 7 12 0M9 14v3" fill="none" stroke="#1476c8" stroke-width="1.500"/></svg>
      <svg class="soi" viewBox="0 0 18 18"><rect x="1" y="3" width="16" height="12" rx="1" fill="#1476c8"/><path d="M3 6h12M3 9h12M5 12h8" stroke="#fff" stroke-dasharray="2 1"/></svg>
      <svg class="soi" viewBox="0 0 18 18"><circle cx="7" cy="5" r="3.500" fill="#a9b9c8"/><path d="M1 15c0-5 3-6 6-6s5 1 6 3" fill="#a9b9c8"/><rect x="8" y="10" width="9" height="6" fill="#fff" stroke="#a9b9c8"/></svg>
      <svg class="soi" viewBox="0 0 18 18"><path d="M5 2h2c1 2 3 2 4 0h2l5 4-3 3-1-1v9H4V8L3 9 0 6z" fill="#1476c8"/></svg>
      <svg class="soi" viewBox="0 0 18 18"><path d="M3 16l7-7c-1-4 2-7 6-6l-3 3 1 2 2 1 3-3c0 5-3 7-7 6l-6 6z" fill="#1476c8"/></svg>
    </div>
  </div>
</div>
</body>
</html>
```
FILE: styles.css
```css
* { box-sizing: border-box; }
html, body { margin: 0; padding: 0; }
body { font: 12px/1.2 "Noto Sans CJK SC", sans-serif; color: #111; background: #f0f0f0; overflow: hidden; }
.defs { display: block; height: 0; }
i { font-style: normal; }
.m { font-family: "Liberation Mono", monospace; font-size: 10px; }
.r .m { margin-top: 2px; }
.ab { font: 9px "Liberation Serif", serif; fill: #555; }
.az { font: bold 9px "Liberation Sans", sans-serif; }
.az.a { fill: #2d63b0; } .az.z { fill: #b03030; }

.app { width: 1366px; height: 768px; display: flex; flex-direction: column; position: relative; overflow: hidden; }

.titlebar { height: 23px; flex: none; background: #fff; display: flex; align-items: center; padding-left: 4px; }
.appicon { width: 15px; height: 15px; margin-right: 4px; flex: none; }
.titletext { font-size: 12.75px; color: #6e6e6e; white-space: nowrap; }
.winctl { margin-left: auto; display: flex; gap: 34px; padding-right: 19px; }
.wc { width: 12px; height: 12px; }

.menubar { height: 31px; flex: none; background: #f1f1f1; display: flex; align-items: center; padding-left: 7px; gap: 10.5px; white-space: nowrap; position: relative; }
.arrow { display: inline-block; width: 0; height: 0; border: 3px solid transparent; border-top: 3px solid #555; border-bottom: 0; flex: none; }
.arrow.dk { border-top-color: #222; }
.ic { width: 16px; height: 16px; flex: none; }
.m-new { height: 18px; margin-left: -2px; }
.m-newtext { margin-left: -6px; }
.a-new { margin-left: -5px; }
.m-xiao { margin-left: 15px; }
.hint { width: 188px; height: 26px; background: #f7f7f7; border-radius: 5px; display: flex; align-items: center; justify-content: flex-start; padding-left: 39px; color: #6b3500; margin-left: -2px; margin-top: -4px; }
.m-user { margin-left: -7px; }
.m-phone { margin-left: -5px; font-size: 12px; }
.a-sm { margin-left: -1px; }
.m-bean { margin-left: -2px; }
.m-bell { width: 14px; height: 18px; margin-left: -2px; }
.more { font: bold 12px "Liberation Sans", sans-serif; color: #222; }
.menubar .more { margin-left: auto; margin-right: 3px; margin-top: -12px; }

.toolrow { height: 30px; flex: none; display: flex; gap: 3px; padding: 0 0 4px; background: #f1f1f1; }
.seg { display: flex; align-items: center; height: 26px; border-radius: 4px; background: linear-gradient(#fbfbfb, #ececec); white-space: nowrap; }
.seg-a { width: 148px; padding-left: 5px; gap: 5px; }
.seg-a .more { margin-left: auto; margin-right: 3px; margin-top: -10px; }
.seg-b { width: 550px; padding-left: 7px; gap: 7.6px; }
.seg-c { flex: 1; padding-left: 2px; gap: 5.7px; }
.t-top { margin-left: -2px; }
.t-zoom { margin-left: 5px; }
.t-zoom .gap { margin-left: 3px; }
.sep { width: 1px; height: 20px; background: #bdbdbd; flex: none; }
.tool { display: inline-flex; align-items: center; gap: 3px; white-space: nowrap; }
.tool .gap { margin-left: 6px; }
.off { color: #9a9a9a; }
.end { margin-left: auto; margin-right: 3px; margin-top: -10px; }
.seg-c .dark { color: #222; }
.sigma { font: bold 14px "Liberation Serif", serif; width: 15px; text-align: center; color: #111; margin-right: 1px; }
.combo2d { width: 62px; height: 23px; border: 1px solid #777; display: flex; align-items: center; gap: 4px; padding-left: 3px; }
.combo2d .arrow { margin-left: 1px; }
.sq { width: 15px; height: 13px; background: linear-gradient(#eee, #d6d6d6); border: 1px solid #ccc; }

.main { height: 624px; flex: none; display: flex; gap: 6px; background: #f1f1f1; }
.nav { width: 165px; flex: none; display: flex; flex-direction: column; }
.navhead { height: 16px; display: flex; justify-content: space-between; align-items: center; border: 1px solid #999; border-bottom-color: #777; font-size: 13px; padding-right: 3px; line-height: 14px; margin-bottom: 1px; white-space: nowrap; }
.pin { display: flex; gap: 7px; }
.pinic { width: 10px; height: 11px; }
.navbtn { height: 21px; flex: none; border: 1px solid #b5b5b5; text-align: center; line-height: 20px; font-size: 13px; background: #f0f0f0; margin-bottom: 1px; }
.pmbar { height: 27px; flex: none; margin-top: 1px; display: flex; align-items: center; gap: 4px; padding-left: 7px; background: linear-gradient(#fafafa, #efefef); }
.pm { width: 18px; height: 18px; }
.navtree { height: 487px; flex: none; border: 1px solid #999; border-width: 1px 1px 2px 2px; margin: 0 2px 1px; background: #f0f0f0; display: flex; flex-direction: column; }
.treebody { flex: 1; display: flex; min-height: 0; }
.rows { width: 142px; background: #fff; overflow: hidden; white-space: nowrap; flex: none; }
.vscroll { flex: 1; display: flex; flex-direction: column; align-items: center; padding: 4px 0 3px; background: #f0f0f0; }
.vthumb { width: 100%; height: 232px; margin-top: 3px; background: #cdcdcd; }
.vspace { flex: 1; }
.sa { width: 10px; height: 10px; flex: none; }
.flip { transform: rotate(180deg); }
.hscroll { height: 16px; flex: none; display: flex; align-items: center; padding-left: 7px; background: #f0f0f0; }
.hthumb { width: 102px; height: 15px; margin-left: 2px; background: #cdcdcd; }
.left { transform: rotate(90deg); }
.right { transform: rotate(-90deg); margin-left: 9px; }

.r { height: 16px; display: flex; align-items: center; line-height: 16px; font-size: 12px; }
.top { padding-left: 4px; background-image: linear-gradient(#888, #888); background-size: 5px 1px; background-position: 16px 8px; background-repeat: no-repeat; }
.tw { width: 10px; height: 10px; flex: none; margin-right: 9px; }
.fo { width: 16px; height: 14px; margin-right: 4px; flex: none; }
.kid { padding-left: 42px;
  background-image:
    repeating-linear-gradient(#777 0 1px, transparent 1px 2px),
    repeating-linear-gradient(#777 0 1px, transparent 1px 2px),
    repeating-linear-gradient(90deg, #777 0 1px, transparent 1px 2px);
  background-size: 1px 100%, 1px 100%, 11px 1px;
  background-position: 11px 0, 30px 0, 30px 8px;
  background-repeat: no-repeat; }
.kid.last { background-size: 1px 100%, 1px 9px, 11px 1px; }
.ci { width: 15px; height: 14px; margin-right: 5px; flex: none; }
.hl { display: flex; align-items: center; background: #d6d6d6; height: 16px; margin-left: -4px; padding: 0 3px 0 4px; }

.work { flex: 1; display: flex; flex-direction: column; min-width: 0; }
.toolbar2 { height: 28px; flex: none; display: flex; align-items: center; gap: 6px; padding-left: 4px; background: linear-gradient(#fbfbfb, #ececec); border-radius: 4px 0 0 4px; white-space: nowrap; }
.ic-x { width: 14px; height: 14px; margin-right: 2px; }
.ic-ud { width: 12px; height: 12px; margin-right: 4px; }
.t-del { margin-left: 2px; }
.t-ren { margin-left: 2px; }
.s-tight { margin-right: -3px; }
.t-cpy { margin-left: 2px; }
.floorsel { width: 60px; height: 22px; background: #fff; display: flex; align-items: center; justify-content: space-between; padding: 0 4px 0 2px; }
.workbody { flex: 1; display: flex; background: #f1f1f1; min-height: 0; }
.midcol { width: 184px; flex: none; display: flex; flex-direction: column; padding-top: 5px; }
.searchrow { height: 25px; flex: none; display: flex; align-items: flex-start; background: #fff; margin-right: 2px; }
.searchbox { width: 157px; height: 24px; border: 1px solid #8c8c8c; color: #777; line-height: 22px; padding-left: 2px; font-size: 12px; background: #fff; margin-left: 1px; }
.searchic { width: 16px; height: 16px; margin: 5px 0 0 5px; }
.comptree { height: 563px; flex: none; background: #fff; border: 1px solid #999; border-width: 1px 2px 2px 1px; margin-right: 1px; padding-top: 1px; }
.tr0 { height: 16px; display: flex; align-items: center; padding-left: 7px; font-size: 13px; }
.tr0 .tw { margin-right: 7px; }
.gzi { width: 14px; height: 14px; margin-right: 6px; flex: none; }
.tr1 { height: 16px; display: flex; align-items: center; padding-left: 45px;
  background-image: repeating-linear-gradient(#777 0 1px, transparent 1px 2px), repeating-linear-gradient(90deg, #777 0 1px, transparent 1px 2px);
  background-size: 1px 100%, 10px 1px; background-position: 32px 0, 32px 8px; background-repeat: no-repeat; }
.tr1.lastc { background-size: 1px 9px, 8px 1px; padding-left: 40px; }
.bi { width: 11px; height: 11px; margin-right: 8px; flex: none; }
.gzt { font: 10px "Liberation Mono", monospace; color: #222; }
.sel { display: flex; align-items: center; height: 16px; width: 51px; background: #3166bd; padding-left: 5px; }
.sel .gzt { color: #1a2238; }

.rightcol { flex: 1; display: flex; flex-direction: column; padding-left: 6px; min-width: 0; }
.tabline { height: 21px; flex: none; background: #fff; border-bottom: 1px solid #ddd; }
.ptab { display: inline-block; height: 21px; width: 61px; padding-left: 4px; background: #fff; border: 1px solid #d6d6d6; border-width: 1px 1px 0 0; line-height: 20px; font-size: 13px; }
.grid { height: 566px; flex: none; margin: 3px 6px 0 1px; background: #fff; border: 1px solid #a8a8a8; overflow: hidden; }
.gr { display: flex; height: 19px; }
.gr.head { height: 24px; }
.n { width: 21px; flex: none; text-align: center; border-right: 1px solid #c5c5c5; border-bottom: 1px solid #c5c5c5; background: linear-gradient(#fcfcfc, #e6e6e6); font: 10.500px/18px "Liberation Mono", monospace; }
.name { width: 194px; flex: none; border-bottom: 1px solid #c5c5c5; line-height: 20px; white-space: nowrap; overflow: hidden; }
.c { text-align: center; padding-top: 1px; font-size: 13px; }
.l1 { padding-left: 21px; }
.l2 { padding-left: 30px; background-image: linear-gradient(#c5c5c5, #c5c5c5), linear-gradient(#c5c5c5, #c5c5c5); background-size: 1px 100%, 16px 1px; background-position: 8px 0, 8px 9px; background-repeat: no-repeat; }
.l2.tail { background-size: 1px 10px, 16px 1px; }
.exp { display: flex; align-items: center; padding-left: 2px; }
.pb { width: 13px; height: 13px; border: 1px solid #bbb; display: flex; align-items: center; justify-content: center; color: #333; margin-right: 6px; font: 12px/1 "Liberation Sans", sans-serif; }
.blue { color: #0000ff; }
.gray { color: #999; }
.cur .n { background: #ffd591; color: #555; }
.cur .name { background: #0078d7; color: #fff; }

.statusbar { height: 20px; flex: none; display: flex; gap: 3px; background: #f1f1f1; }
.sc { height: 20px; background: linear-gradient(#fafafa, #eee); border: 1px solid #e2e2e2; line-height: 18px; padding-left: 1px; white-space: nowrap; }
.s1 { width: 147px; } .s2 { width: 77px; } .s3 { width: 97px; } .s4 { width: 47px; } .s5 { width: 913px; } .s6 { flex: 1; }

.taskbar { height: 40px; flex: none; background: #08171d; display: flex; align-items: center; color: #e6e6e6; }
.start { width: 48px; height: 40px; background: #000; display: flex; align-items: center; justify-content: center; flex: none; }
.winlogo { width: 16px; height: 16px; }
.tbsearch { width: 344px; height: 40px; background: #f1f1f1; display: flex; align-items: center; padding-left: 11px; flex: none; }
.cortana { width: 19px; height: 19px; border: 3px solid #111; border-radius: 50%; flex: none; margin-right: 10px; }
.tbph { font-size: 14px; color: #333; }
.mic { width: 12px; height: 18px; margin-left: auto; margin-right: 15px; }
.tbapps { display: flex; align-items: center; height: 40px; margin-left: -2px; flex: none; }
.tbi { width: 51px; height: 40px; display: flex; align-items: center; justify-content: center; flex: none; }
.tbi.narrow { width: 50px; }
.tbi.ul { width: 49px; box-shadow: inset 0 -2px 0 #6cb3e6; }
.tbi.u2 { width: 50px; }
.tbi.act { width: 48px; margin-left: 1px; background: #2c3f48; box-shadow: inset 0 -2px 0 #6cb3e6; }
.ti { width: 18px; height: 18px; }
.ti.big { width: 24px; height: 24px; }
.tbsep { width: 3px; height: 20px; border-left: 1px solid #555; border-right: 1px solid #555; margin: 0 13px 0 6px; flex: none; }
.tbscroll { width: 17px; height: 40px; margin-left: 74px; background: #f0f0f0; display: flex; flex-direction: column; align-items: center; justify-content: space-around; flex: none; }
.tb2 { margin: 0 6px 0 14px; }
.tblink { color: #d8d8d8; white-space: nowrap; }
.tray { width: 16px; height: 16px; flex: none; }
.people { width: 16px; height: 18px; margin-left: 23px; }
.cpu { width: 60px; margin-left: 26px; display: flex; flex-direction: column; align-items: center; line-height: 17px; white-space: nowrap; }
.traybox { display: flex; align-items: center; gap: 8px; margin-left: 10px; }
.tr-up { margin-right: 2px; }
.tr-bell { margin-right: 2px; }
.kbd { width: 24px; }
.tbzh { font-size: 13px; margin: 0 2px; }
.clock { width: 60px; margin-left: 11px; display: flex; flex-direction: column; align-items: center; line-height: 18px; white-space: nowrap; }
.notif { margin-left: 24px; position: relative; width: 26px; height: 26px; }
.noti { width: 17px; height: 17px; }
.nbadge { position: absolute; left: 7px; top: 9px; width: 16px; height: 16px; border-radius: 50%; background: #4a4a4a; color: #fff; text-align: center; font: bold 11px/16px "Liberation Sans", sans-serif; }

.dialog { position: absolute; left: 485px; top: 132px; width: 858px; height: 571px; background: linear-gradient(#9ab4d2 0, #b9d2eb 31px, #b9d2eb 100%); border: 1px solid #333; border-bottom-color: #0a6a8a; display: flex; flex-direction: column; }
.dtitle { height: 30px; flex: none; padding: 11px 0 0 7px; font-size: 12px; line-height: 15px; }
.dclient { margin: 0 6px 4px 7px; flex: 1; background: #eee; display: flex; flex-direction: column; min-height: 0; }
.dtabs { height: 21px; flex: none; display: flex; align-items: flex-end; padding-left: 1px; }
.dtab { width: 47px; height: 17px; border: 1px solid #dcdcdc; border-bottom: 0; background: #eee; line-height: 15px; padding-left: 5px; font-size: 13px; }
.dtab.on { width: 51px; height: 21px; background: #fff; line-height: 19px; padding-left: 6px; }
.dpane { margin: 0 2px 0 5px; height: 491px; flex: none; border-top: 1px solid #d6d6d6; display: flex; flex-direction: column; }
.dtools { height: 28px; flex: none; margin-top: 1px; background: linear-gradient(#fff, #efefef); display: flex; align-items: center; gap: 10px; padding-left: 2px; white-space: nowrap; }
.d-sep { margin: 0 -2.500px 0 -3px; }
.grip { width: 2px; height: 14px; flex: none; background: repeating-linear-gradient(#aaa 0 2px, transparent 2px 4px); margin-right: -2px; }
.act { border: 1px solid #1c7cc8; background: #e5f0f8; padding: 2px 3px; margin: 0 -4px; line-height: 16px; }
.dinfo { height: 24px; flex: none; margin-top: 2px; display: flex; align-items: center; gap: 5px; padding-left: 2px; white-space: nowrap; }
.dinfo .off { margin-left: 3px; }
.dsel { width: 133px; height: 22px; border: 1px solid #777; display: flex; align-items: center; justify-content: space-between; padding: 0 5px 0 2px; color: #999; font: 12px "Liberation Sans", sans-serif; margin-left: -2px; }
.canvas { width: 834px; height: 424px; flex: none; margin-top: 4px; border: 2px solid #f00; background: #000; overflow: hidden; }
.cad { display: block; }
.gridl path { fill: none; stroke: #474747; stroke-width: 1; stroke-dasharray: 10 3 3 3; }
.axis { fill: none; stroke: #777; stroke-dasharray: 14 3 3 3; }
.outline { fill: none; stroke: #fff; stroke-width: 3; }
.dim path { fill: none; stroke: #00ff00; stroke-width: 1.800; }
.leader { fill: none; stroke: #fff; stroke-width: 1; }
.rebar path { fill: none; stroke: #ff0000; stroke-width: 5; }
.node circle { fill: none; stroke: #ffff00; stroke-width: 1; }
.lab { font: 11px "Liberation Mono", monospace; fill: #555; text-anchor: middle; }
.callout { font: 23px "Noto Sans CJK SC", sans-serif; fill: #fff; }
.gr4 { font: 23px "Liberation Serif", serif; fill: #00e000; }
.dimt { font: 24px "Liberation Serif", serif; fill: #fff; }
.dstatus { height: 20px; margin-top: -1px; flex: none; display: flex; gap: 3px; }
.ds1 { width: 148px; background: #eee; border: 1px solid #e2e2e2; line-height: 18px; padding-left: 8px; }
.ds2 { flex: 1; background: linear-gradient(#fff, #eee); border: 1px solid #e2e2e2; line-height: 18px; padding-left: 1px; display: flex; justify-content: space-between; align-items: center; white-space: nowrap; }
.sizer { width: 12px; height: 12px; margin: 6px 2px 0 0; }

.badge74 { position: absolute; left: 464px; top: -22px; width: 42px; height: 42px; border-radius: 50%; background: #3fb23a; box-shadow: 0 2px 3px rgba(0,0,0,.5); display: flex; align-items: flex-end; justify-content: center; color: #fff; font: bold 11px/1 "Liberation Sans", sans-serif; padding-bottom: 9px; }
.sogou { position: absolute; left: 1017px; top: 9px; display: flex; align-items: flex-start; }
.sologo { width: 24px; height: 26px; position: relative; z-index: 1; margin-right: -1px; }
.sobar { width: 184px; height: 22px; margin-top: 4px; background: #fff; border: 1px solid #b7cfe0; display: flex; align-items: center; gap: 7px; padding-left: 9px; color: #1476c8; }
.soen { font-weight: 700; font-size: 14px; }
.sopunc { font-weight: 700; font-size: 12px; width: 10px; }
.soi { width: 16px; height: 16px; flex: none; }
```
